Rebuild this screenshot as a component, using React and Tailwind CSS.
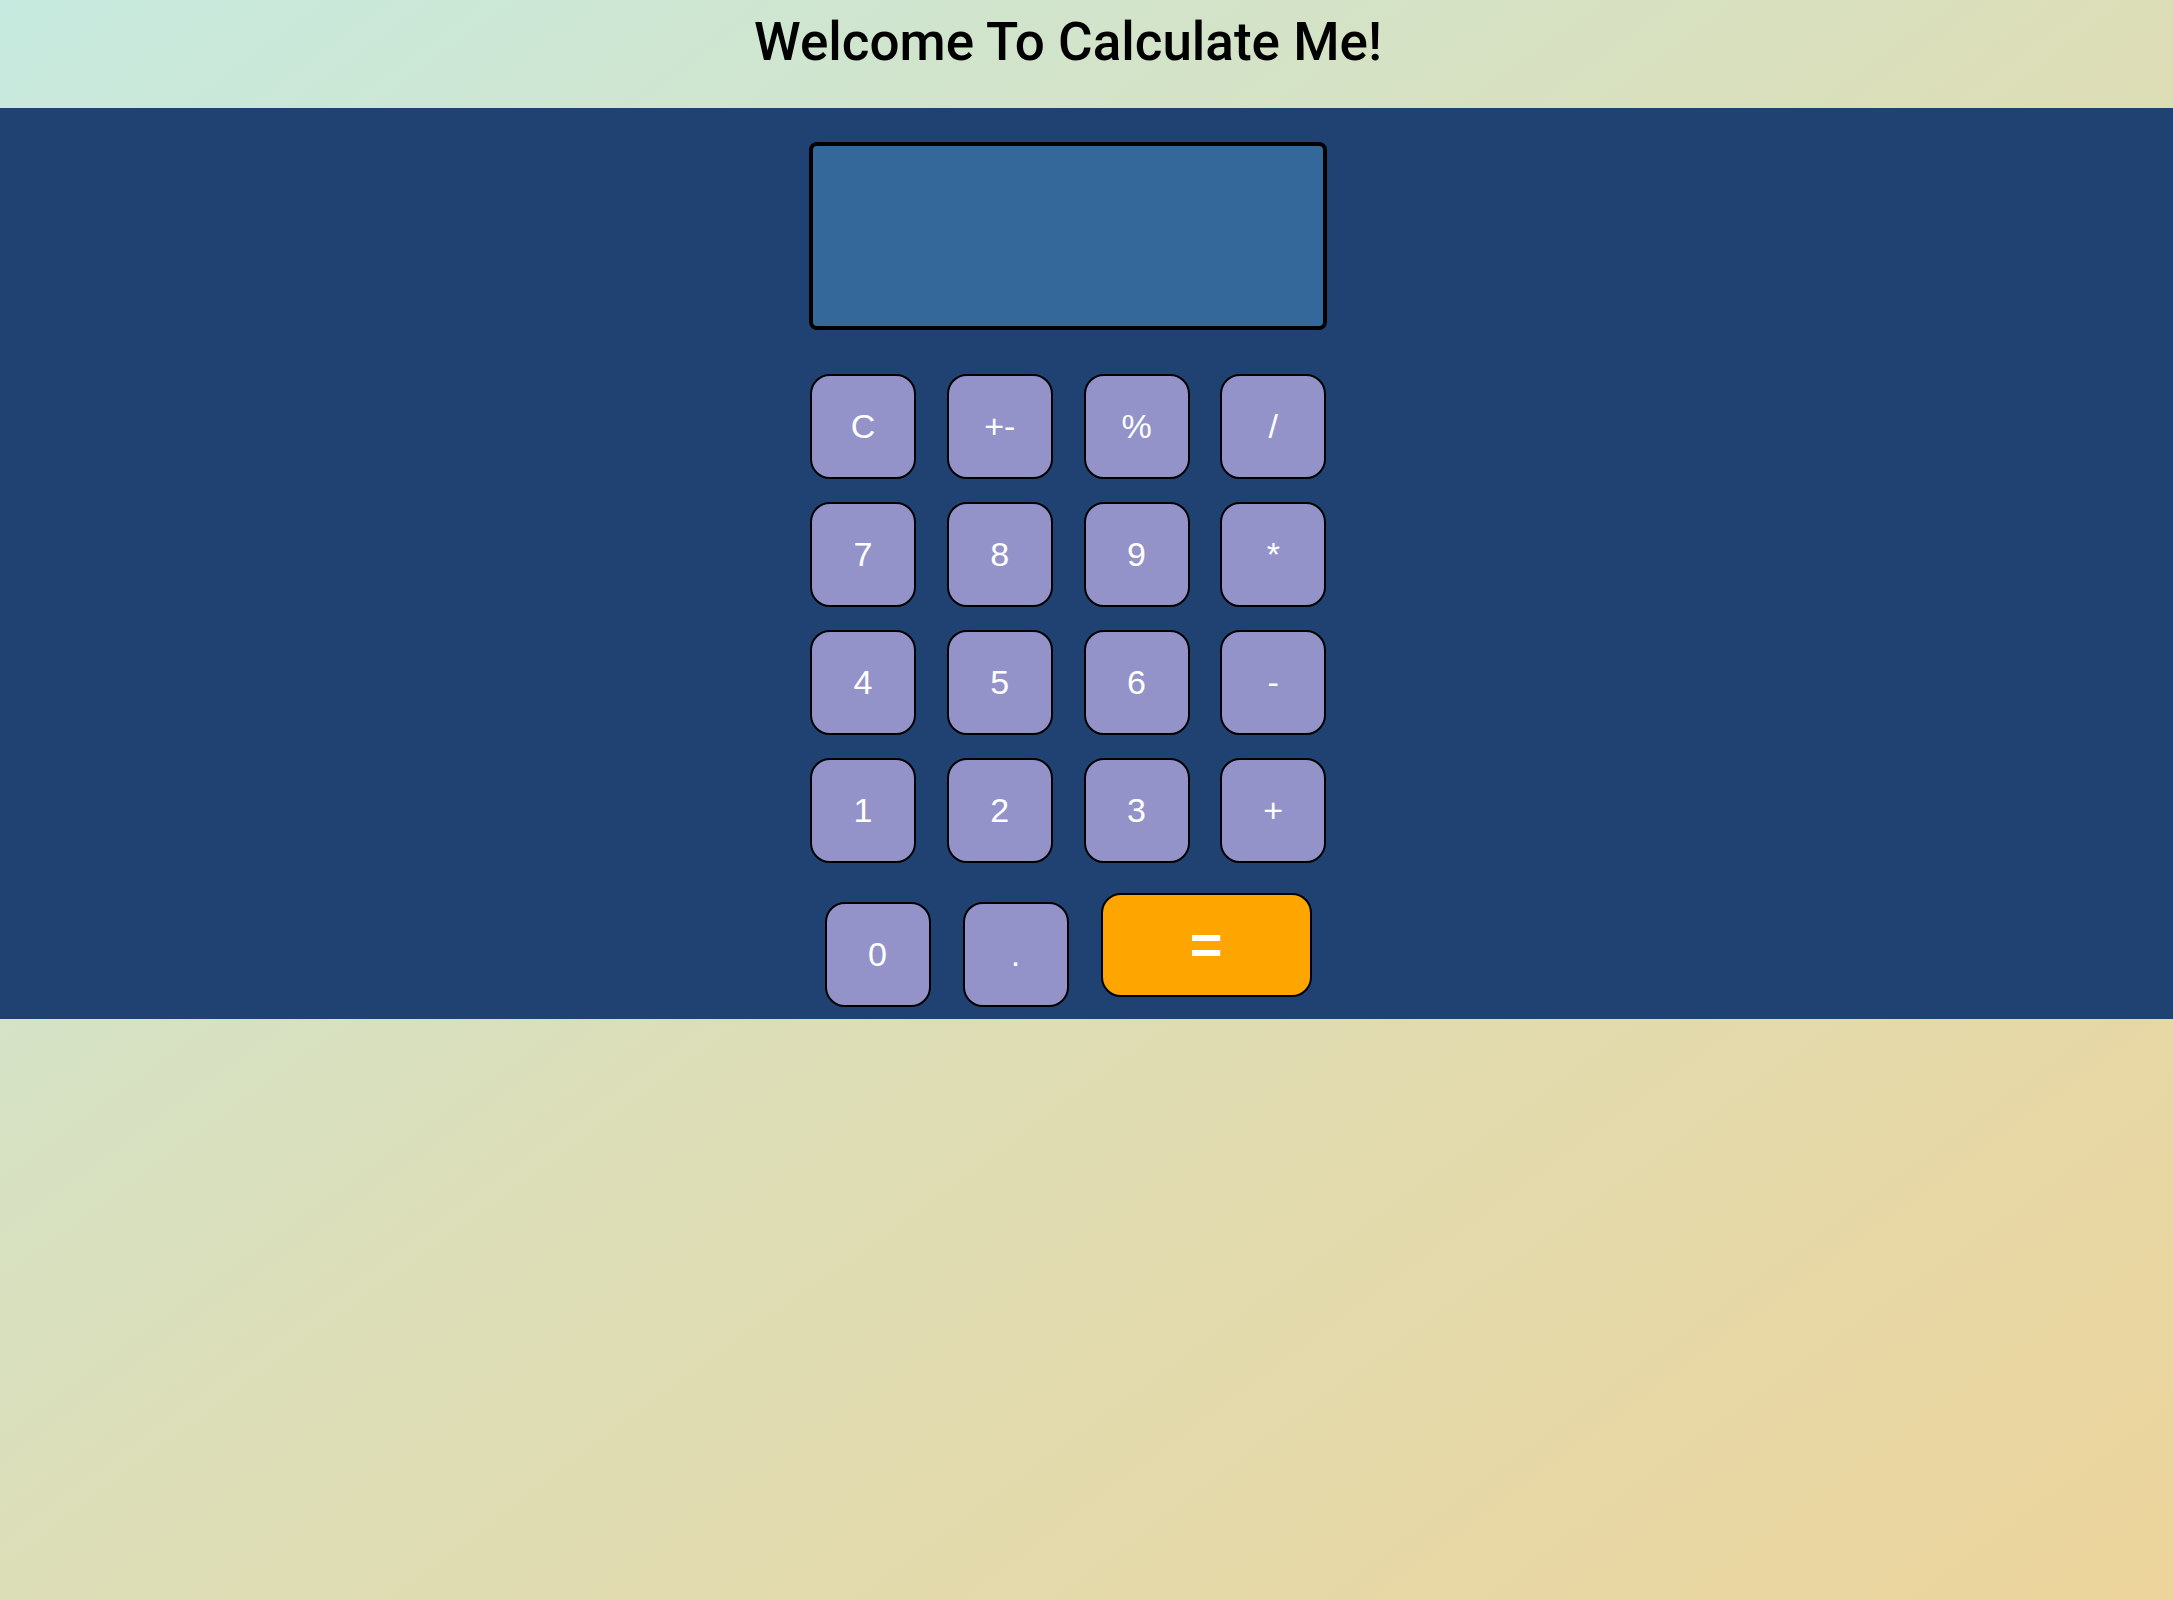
export default function App() {
  const rows = [
    ["C", "+-", "%", "/"],
    ["7", "8", "9", "*"],
    ["4", "5", "6", "-"],
    ["1", "2", "3", "+"],
  ];

  const key =
    "w-[106px] h-[105px] rounded-[20px] border-2 border-black bg-[#9393c9] text-white text-[34px] flex items-center justify-center";

  return (
    <div className="min-h-screen bg-linear-to-br from-[#c6eadf] via-[#dcdeb7] to-[#ecd49b] font-['Liberation_Sans',Arial,sans-serif]">
      <header className="h-[108px] pt-[11px] pr-[37px] flex justify-center">
        <h1 className="text-[53px] leading-[63px] font-medium text-black font-['Roboto',sans-serif]">
          Welcome To Calculate Me!
        </h1>
      </header>

      <main className="bg-[#1f4272] pt-[34px] pb-[12px] pr-[37px] flex flex-col items-center">
        <div className="w-[518px] h-[188px] rounded-lg border-4 border-black bg-[#35689a]"></div>

        <div className="mt-[44px] w-[516px] grid grid-cols-4 gap-x-[31px] gap-y-[23px]">
          {rows.flat().map((k) => (
            <button key={k} className={key}>
              {k}
            </button>
          ))}
        </div>

        <div className="mt-[30px] flex items-start gap-[32px]">
          <button className={key + " mt-[9px]"}>0</button>
          <button className={key + " mt-[9px]"}>.</button>
          <button className="w-[211px] h-[104px] rounded-[20px] border-2 border-black bg-[#ffa500] text-white text-[56px] font-bold flex items-center justify-center">
            =
          </button>
        </div>
      </main>
    </div>
  );
}
